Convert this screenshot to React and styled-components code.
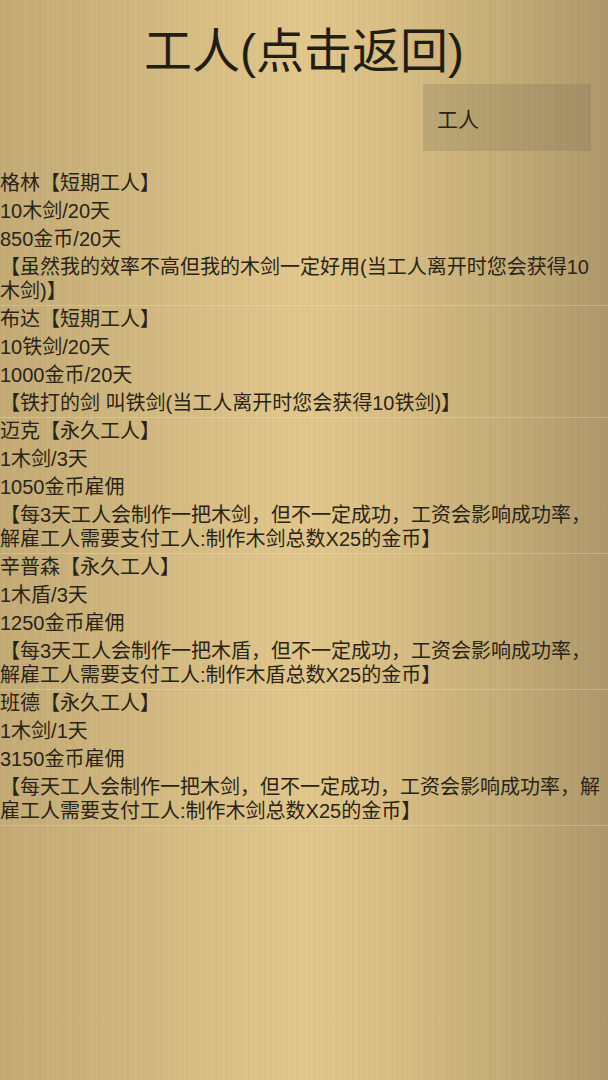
import React from 'react';
import styled, { createGlobalStyle } from 'styled-components';

const GlobalStyle = createGlobalStyle`
  html, body {
    margin: 0;
    padding: 0;
  }
  body {
    font-family: "Liberation Sans", "Noto Sans CJK SC", sans-serif;
    color: #2a2418;
  }
`;

const workers = [
  {
    name: '格林【短期工人】',
    output: '10木剑/20天',
    cost: '850金币/20天',
    desc: '【虽然我的效率不高但我的木剑一定好用(当工人离开时您会获得10木剑)】',
  },
  {
    name: '布达【短期工人】',
    output: '10铁剑/20天',
    cost: '1000金币/20天',
    desc: '【铁打的剑 叫铁剑(当工人离开时您会获得10铁剑)】',
  },
  {
    name: '迈克【永久工人】',
    output: '1木剑/3天',
    cost: '1050金币雇佣',
    desc: '【每3天工人会制作一把木剑，但不一定成功，工资会影响成功率，解雇工人需要支付工人:制作木剑总数X25的金币】',
  },
  {
    name: '辛普森【永久工人】',
    output: '1木盾/3天',
    cost: '1250金币雇佣',
    desc: '【每3天工人会制作一把木盾，但不一定成功，工资会影响成功率，解雇工人需要支付工人:制作木盾总数X25的金币】',
  },
  {
    name: '班德【永久工人】',
    output: '1木剑/1天',
    cost: '3150金币雇佣',
    desc: '【每天工人会制作一把木剑，但不一定成功，工资会影响成功率，解雇工人需要支付工人:制作木剑总数X25的金币】',
  },
];

const App = () => (
  <Page>
    <GlobalStyle />
    <Header>
      <Title>工人(点击返回)</Title>
      <TabRow>
        <TabBox>工人</TabBox>
      </TabRow>
    </Header>
    <WorkerList>
      {workers.map(w => (
        <WorkerCard key={w.name}>
          <Line>{w.name}</Line>
          <Line>{w.output}</Line>
          <Line>{w.cost}</Line>
          <Line>{w.desc}</Line>
        </WorkerCard>
      ))}
    </WorkerList>
  </Page>
);

const Page = styled.div`
  min-height: 100vh;
  box-sizing: border-box;
  background-color: #d6bc82;
  background-image:
    repeating-linear-gradient(
      90deg,
      rgba(90, 70, 30, 0.035) 0 1px,
      transparent 1px 3px,
      rgba(255, 245, 210, 0.04) 3px 4px,
      transparent 4px 6px,
      rgba(90, 70, 30, 0.025) 6px 8px,
      transparent 8px 11px
    ),
    linear-gradient(
      90deg,
      #c4ab76 0%,
      #cfb67e 20%,
      #dcc288 40%,
      #e1c78c 50%,
      #d8be84 65%,
      #c4ad77 82%,
      #ae986b 100%
    );
`;

const Header = styled.div`
  display: flex;
  flex-direction: column;
  padding-top: 22px;
`;

const Title = styled.div`
  font-size: 48px;
  line-height: 60px;
  text-align: center;
  color: #231e14;
  cursor: pointer;
  user-select: none;
`;

const TabRow = styled.div`
  display: flex;
  justify-content: flex-end;
  padding-right: 17px;
  margin-top: 2px;
`;

const TabBox = styled.div`
  width: 168px;
  height: 67px;
  box-sizing: border-box;
  padding-left: 14px;
  display: flex;
  align-items: center;
  font-size: 21px;
  color: #2a2418;
  background: rgba(105, 95, 75, 0.2);
`;

const WorkerList = styled.div`
  display: flex;
  flex-direction: column;
  margin-top: 18px;
`;

const WorkerCard = styled.div`
  display: flex;
  flex-direction: column;
  border-bottom: 1px solid rgba(255, 245, 215, 0.25);
  margin-bottom: -1px;
`;

const Line = styled.div`
  font-size: 20px;
  line-height: 24px;
  padding: 2px 0;
  word-break: break-all;
`;

export default App;
